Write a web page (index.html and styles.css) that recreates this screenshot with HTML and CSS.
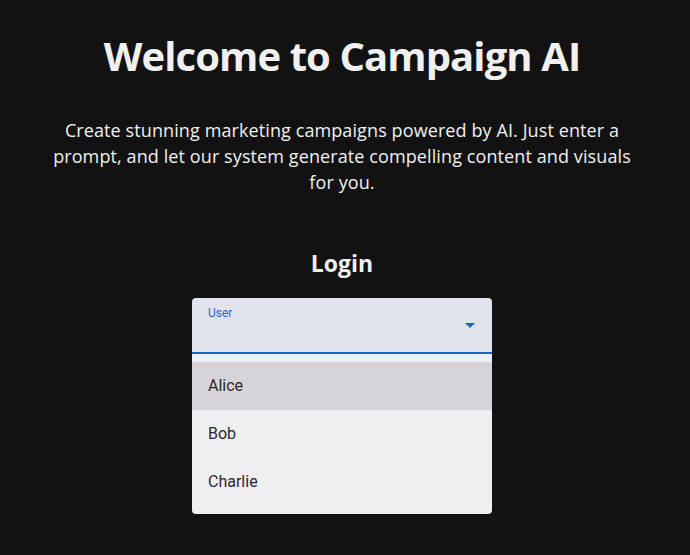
FILE: index.html
```html
<!DOCTYPE html>
<html>
<head>
<meta charset="utf-8">
<link rel="stylesheet" href="styles.css">
</head>
<body>
<main class="page">
  <h1 class="title">Welcome to Campaign AI</h1>
  <p class="intro">Create stunning marketing campaigns powered by AI. Just enter a prompt, and let our system generate compelling content and visuals for you.</p>
  <h2 class="login">Login</h2>
  <div class="select">
    <div class="field">
      <span class="label">User</span>
      <svg class="arrow" width="24" height="24" viewBox="0 0 24 24"><path d="M7 10l5 5 5-5z" fill="#1565c0"/></svg>
    </div>
    <ul class="menu">
      <li class="item active">Alice</li>
      <li class="item">Bob</li>
      <li class="item">Charlie</li>
    </ul>
  </div>
</main>
</body>
</html>
```

FILE: styles.css
```css
html, body {
  margin: 0;
  padding: 0;
  background: #121212;
  height: 100%;
}
body {
  font-family: "Open Sans", "Noto Sans", sans-serif;
  color: #f0f0f0;
}
.page {
  display: flex;
  flex-direction: column;
  align-items: center;
  padding: 26px 6px 0 0;
}
.title {
  margin: 0;
  font-size: 40px;
  font-weight: 700;
  line-height: 60px;
  letter-spacing: -0.9px;
}
.intro {
  margin: 31px 0 0;
  width: 590px;
  text-align: center;
  font-size: 18px;
  line-height: 26px;
  letter-spacing: 0.1px;
}
.login {
  margin: 53px 0 0;
  font-size: 23px;
  line-height: 30px;
  font-weight: 700;
}
.select {
  margin-top: 20px;
  width: 300px;
  font-family: Roboto, sans-serif;
}
.field {
  position: relative;
  height: 54px;
  background: #e0e3ec;
  border-radius: 4px 4px 0 0;
  border-bottom: 2px solid #1565c0;
}
.label {
  position: absolute;
  left: 16px;
  top: 8px;
  font-size: 12px;
  line-height: 14px;
  color: #1a6dc8;
}
.arrow {
  position: absolute;
  right: 10px;
  top: 15px;
}
.menu {
  list-style: none;
  margin: 0;
  padding: 8px 0;
  background: #efeef1;
  border-radius: 0 0 4px 4px;
}
.item {
  height: 48px;
  line-height: 48px;
  padding: 0 16px;
  font-size: 16px;
  color: #2a2a2e;
}
.item.active {
  background: #d6d4d8;
}
```
